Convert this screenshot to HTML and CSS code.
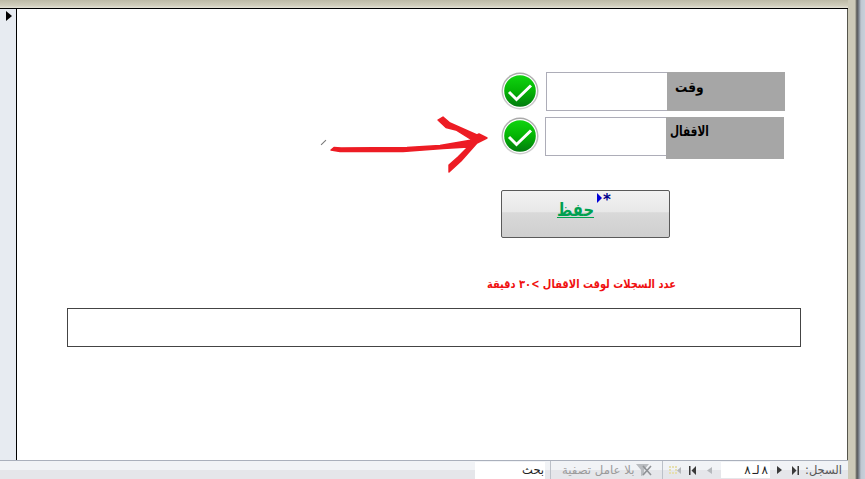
FILE: index.html
```html
<!DOCTYPE html>
<html lang="ar">
<head>
<meta charset="utf-8">
<title>Form</title>
<link rel="stylesheet" href="styles.css">
</head>
<body>
<div class="frame">
  <div class="maincol">
    <div class="topband"></div>
    <div class="middle">
      <div class="selector">
        <svg class="sel-arrow" width="6" height="10" viewBox="0 0 6 10"><path d="M0 0L6 5L0 10Z" fill="#000"/></svg>
      </div>
      <main class="canvas">
        <div class="field field-a">
          <div class="input"></div><div class="label label-a"><span class="lt lt-a">وقت</span></div>
        </div>
        <div class="field field-b">
          <div class="input"></div><div class="label label-b"><span class="lt lt-b">الاقفال</span></div>
        </div>
        <svg class="check check-a" width="38" height="38" viewBox="0 0 38 38"><use href="#tick"/></svg>
        <svg class="check check-b" width="38" height="38" viewBox="0 0 38 38"><use href="#tick"/></svg>
        <svg class="arrow" width="170" height="70" viewBox="325 110 170 70">
          <path d="M331 150L334 147.500L341 148L407 147.500L440 145.500L472 140L456 130L446 127.500L438 120L443 117L450 123L477 135L479 134L487 138L477 143L461 161L449 172L449 165L458 157L468 147L443 148.500L403 151.500L340 151.500Z" fill="#ed1c24" stroke="#ed1c24" stroke-width="1.400" stroke-linejoin="round"/>
        </svg>
        <div class="tick-mark"></div>
        <button class="save"><span class="save-text">حفظ</span><span class="marker"><svg width="5" height="10" viewBox="0 0 5 10"><path d="M0 0L5 5L0 10Z" fill="#0000d8"/></svg><span class="star">*</span></span></button>
        <p class="note">عدد السجلات لوقت الاقفال &gt;٣٠ دقيقة</p>
        <div class="wide"></div>
      </main>
    </div>
    <footer class="status">
      <div class="status-fill"></div>
      <div class="search">بحث</div>
      <span class="sep sep-a"></span>
      <div class="filter"><span class="filter-text">بلا عامل تصفية</span>
        <svg width="16" height="14" viewBox="0 0 16 14"><path d="M0 1H13L8 7V12L5 13V7Z" fill="#b9bcc0"/><path d="M7 3L15 12M15 3L7 12" stroke="#8f9296" stroke-width="1.600"/></svg>
      </div>
      <span class="sep"></span>
      <div class="nav">
        <svg width="8" height="8" viewBox="0 0 8 8"><path d="M0 0H2V2H0ZM3 0H5V2H3ZM6 0H8V2H6ZM0 3H2V5H0ZM6 3H8V5H6ZM0 6H2V8H0ZM3 6H5V8H3ZM6 6H8V8H6Z" fill="#e6dfb0"/></svg>
        <svg width="4" height="7" viewBox="0 0 4 7"><path d="M4 0V7L0 3.500Z" fill="#b5b8bc"/></svg>
        <svg class="n2" width="7" height="9" viewBox="0 0 7 9"><path d="M0 0H1.500V9H0ZM7 0V9L2.500 4.500Z" fill="#3a3a3a"/></svg>
        <svg class="n3" width="5" height="7" viewBox="0 0 5 7"><path d="M5 0V7L0 3.500Z" fill="#b5b8bc"/></svg>
        <div class="record">٨ لـ ٨</div>
        <svg class="n4" width="5" height="8" viewBox="0 0 5 8"><path d="M0 0V8L5 4Z" fill="#3a3a3a"/></svg>
        <svg class="n5" width="7" height="9" viewBox="0 0 7 9"><path d="M0 0V9L4.500 4.500ZM5.500 0H7V9H5.500Z" fill="#3a3a3a"/></svg>
        <span class="rec-label">السجل:</span>
      </div>
    </footer>
  </div>
  <div class="sideframe"></div>
</div>
<svg class="defs" width="0" height="0">
  <defs>
    <linearGradient id="g" x1="0" y1="0" x2="0" y2="1"><stop offset="0" stop-color="#10d410"/><stop offset="0.5" stop-color="#04b404"/><stop offset="1" stop-color="#027a10"/></linearGradient>
    <linearGradient id="r" x1="0" y1="0" x2="0" y2="1"><stop offset="0" stop-color="#a8a8a8"/><stop offset="1" stop-color="#cfcfcf"/></linearGradient>
    <symbol id="tick" viewBox="0 0 38 38">
      <circle cx="19" cy="19" r="18.500" fill="url(#r)"/>
      <circle cx="19" cy="19" r="17" fill="#fff"/>
      <circle cx="19" cy="19" r="15.800" fill="url(#g)"/>
      <path d="M8 20L15.500 27.500L30 13.500" fill="none" stroke="#fff" stroke-width="3"/>
    </symbol>
  </defs>
</svg>
</body>
</html>
```
FILE: styles.css
```css
html, body { margin: 0; padding: 0; }
body { width: 865px; height: 479px; overflow: hidden; font-family: "DejaVu Sans", "Liberation Sans", sans-serif; background: #fff; }
.frame { width: 865px; height: 479px; display: flex; overflow: hidden; }
.maincol { width: 848px; flex: none; display: flex; flex-direction: column; }
.topband { height: 8px; flex: none; background: linear-gradient(#bdbaa6, #d0cdbc 70%, #e6e4d8); }
.middle { flex: 1; display: flex; min-height: 0; border-top: 1px solid #000; }
.selector { width: 10px; flex: none; background: #e7ebf1; border-right: 1px solid #000; padding: 2px 0 0 6px; }
.sel-arrow { display: block; }
.canvas { flex: 1; position: relative; background: #fff; border-right: 1px solid #55554c; }
.sideframe { flex: 1; background: linear-gradient(90deg, #cdcab8 0, #cdcab8 7px, #8a8a80 8px, #555 9px, #7f8791 11px, #c0c8d2 13px, #c8d0da 100%); }
.field { position: absolute; display: flex; width: 239px; }
.field-a { left: 529px; top: 63px; height: 39px; }
.field-b { left: 528px; top: 108px; height: 42px; }
.input { width: 120px; height: 37px; background: #fff; border: 1px solid #adadb8; border-right: none; }
.label { flex: 1; background: #a6a6a6; font-weight: 700; font-size: 14px; color: #000; }
.label-a { padding: 7px 0 0 8px; }
.label-b { padding: 6px 0 0 4px; }
.lt { display: inline-block; transform-origin: left center; }
.lt-a { transform: scaleX(.875); }
.lt-b { transform: scaleX(.75); }
.check { position: absolute; left: 484px; }
.check-a { top: 63px; }
.check-b { top: 108px; }
.arrow { position: absolute; left: 308px; top: 101px; }
.tick-mark { position: absolute; left: 303px; top: 133px; width: 7px; height: 1px; background: #777; transform: rotate(-45deg); }
.save { position: absolute; left: 484px; top: 181px; width: 169px; height: 48px; padding: 0; border: 1px solid #5a5a5a; border-radius: 2px; background: linear-gradient(#f2f2f2, #e8e8e8 46%, #d9d9d9 47%, #cfcfcf); font-family: "DejaVu Sans", sans-serif; }
.save-text { display: block; color: #00a050; font-weight: 700; font-size: 18px; text-decoration: underline; line-height: 24px; margin: -8px 0 0 0; position: relative; left: -10px; transform: scaleX(.82); }
.marker { position: absolute; left: 95px; top: 2px; display: flex; align-items: flex-start; }
.star { color: #00008b; font-size: 15px; line-height: 12px; font-weight: 700; margin: 1px 0 0 1px; }
.note { position: absolute; left: 439px; top: 268px; width: 220px; margin: 0; direction: rtl; color: #f01010; font-weight: 700; font-size: 11.500px; text-align: right; transform: scaleX(.86); transform-origin: right center; }
.wide { position: absolute; left: 50px; top: 299px; width: 732px; height: 37px; border: 1px solid #444; background: #fff; }
.status { height: 18px; flex: none; display: flex; align-items: stretch; border-top: 1px solid #aab0bc; background: linear-gradient(#f1f3f6 0, #f1f3f6 50%, #e5e6ea 50%, #e5e6ea 100%); font-size: 11.500px; color: #333; }
.status-fill { flex: 1; }
.search { width: 70px; margin: 1px 0 0 0; background: #fff; text-align: right; padding-right: 1px; box-sizing: border-box; line-height: 16px; color: #222; font-size: 11.500px; }
.sep { width: 1px; flex: none; background: #bcc1c9; }
.sep-a { margin-left: 5px; }
.filter { width: 111px; box-sizing: border-box; display: flex; align-items: center; gap: 4px; color: #9a9a9a; padding-left: 11px; }
.filter-text { width: 70px; flex: none; font-size: 11.700px; white-space: nowrap; text-align: center; }
.filter svg { flex: none; }
.nav { display: flex; align-items: center; padding: 0 6px 0 6px; }
.n2 { margin-left: 8px; }
.n3 { margin-left: 11px; }
.record { width: 49px; height: 16px; margin-left: 9px; background: #fff; direction: rtl; text-align: right; padding-right: 2px; box-sizing: border-box; line-height: 16px; color: #222; font-size: 12px; word-spacing: -2px; }
.n4 { margin-left: 7px; }
.n5 { margin-left: 10px; }
.rec-label { margin-left: 6px; color: #555; white-space: nowrap; direction: rtl; }
.defs { position: absolute; }
```
